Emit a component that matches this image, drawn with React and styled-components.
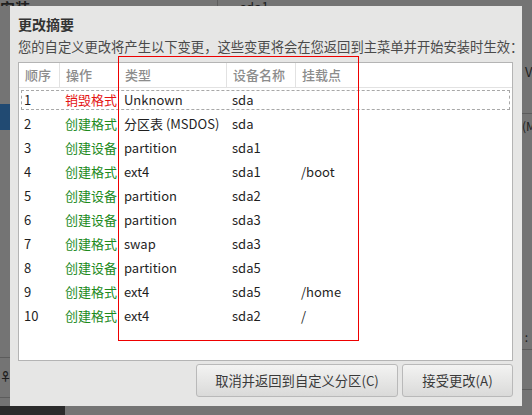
import React from "react";
import styled, { createGlobalStyle } from "styled-components";

const GlobalStyle = createGlobalStyle`
  html, body {
    margin: 0;
    padding: 0;
    background: #747474;
  }
  body {
    font-family: "Noto Sans CJK SC", "Noto Sans", sans-serif;
  }
`;

const Screen = styled.div`
  position: relative;
  width: 532px;
  height: 415px;
  overflow: hidden;
  background: #747474;
  display: grid;
  grid-template-columns: 10px 512px 10px;
  grid-template-rows: 6px 400px 9px;
`;

/* the dimmed installer window behind the dialog */
const TopBand = styled.div`
  grid-column: 1 / -1;
  display: grid;
  grid-template-columns: 217px 23px 1fr;
  overflow: hidden;
`;

const TopCell = styled.div`
  display: flex;
  align-items: flex-end;
  border-left: ${({ divided }) => (divided ? "1px solid #5e5e5e" : "none")};
`;

const DimText = styled.span`
  font-size: ${({ size }) => size || 13}px;
  font-weight: ${({ bold }) => (bold ? 700 : 400)};
  line-height: ${({ size }) => size || 13}px;
  color: #1e1e1e;
  white-space: nowrap;
  margin-bottom: ${({ drop }) => drop || 0}px;
`;

const SideStrip = styled.div`
  display: flex;
  flex-direction: column;
  overflow: hidden;
`;

const Gap = styled.div`
  flex: none;
  height: ${({ h }) => h}px;
`;

const Band = styled.div`
  flex: none;
  height: ${({ h }) => h || 1}px;
  background: ${({ color }) => color || "#5c5c5c"};
`;

const BottomBand = styled.div`
  grid-column: 1 / -1;
  display: flex;
`;

const Taskbar = styled.div`
  width: 65px;
  background: #2b2b2b;
`;

const Dialog = styled.div`
  position: relative;
  z-index: 1;
  background: #e6e6e5;
  padding: 8px 9px 9px 8px;
  display: flex;
  flex-direction: column;
`;

const Title = styled.div`
  font-size: 14px;
  font-weight: 700;
  line-height: 20px;
  color: #333;
`;

const Subtitle = styled.div`
  margin-top: 3px;
  font-size: 13.3px;
  line-height: 20px;
  color: #4a4a4a;
  white-space: nowrap;
`;

const Table = styled.div`
  margin-top: 5px;
  height: 299px;
  box-sizing: border-box;
  background: #fff;
  border: 1px solid #b4b4b4;
`;

const cols = "41px 59px 108px 69px 1fr";

const HeadRow = styled.div`
  display: grid;
  grid-template-columns: ${cols};
  height: 24px;
  border-bottom: 1px solid #e2e2e2;
`;

const HeadCell = styled.div`
  padding-left: 6px;
  font-size: 13px;
  line-height: 24px;
  color: #8c8c8c;
  font-weight: 500;
  border-right: ${({ last }) => (last ? "none" : "1px solid #e2e2e2")};
`;

const Row = styled.div`
  display: grid;
  grid-template-columns: ${cols};
  height: 24px;
  align-items: center;
  outline: ${({ focused }) => (focused ? "1px dashed #a8a8a8" : "none")};
  outline-offset: -3px;
`;

const Cell = styled.div`
  padding-left: 5px;
  font-size: 13px;
  line-height: 20px;
  color: ${({ tone }) =>
    tone === "destroy" ? "#e41414" : tone === "create" ? "#1d8a1d" : "#1f1f1f"};
  white-space: nowrap;
`;

const Footer = styled.div`
  margin-top: 3px;
  display: flex;
  justify-content: flex-end;
  gap: 4px;
`;

const Button = styled.button`
  width: ${({ w }) => w}px;
  height: 33px;
  box-sizing: border-box;
  border: 1px solid #b9b9b9;
  border-radius: 3px;
  background: linear-gradient(#f3f3f2, #dadad9);
  font-family: "Noto Sans CJK SC", "Noto Sans", sans-serif;
  font-size: 13.3px;
  color: #3a3a3a;
  padding: 0;
`;

// red annotation frame drawn over the screenshot
const Highlight = styled.div`
  position: absolute;
  z-index: 2;
  left: 118px;
  top: 56px;
  width: 241px;
  height: 285px;
  box-sizing: border-box;
  border: 1px solid #ee0000;
  pointer-events: none;
`;

const changes = [
  { action: "销毁格式", tone: "destroy", type: "Unknown", device: "sda", mount: "" },
  { action: "创建格式", tone: "create", type: "分区表 (MSDOS)", device: "sda", mount: "" },
  { action: "创建设备", tone: "create", type: "partition", device: "sda1", mount: "" },
  { action: "创建格式", tone: "create", type: "ext4", device: "sda1", mount: "/boot" },
  { action: "创建设备", tone: "create", type: "partition", device: "sda2", mount: "" },
  { action: "创建设备", tone: "create", type: "partition", device: "sda3", mount: "" },
  { action: "创建格式", tone: "create", type: "swap", device: "sda3", mount: "" },
  { action: "创建设备", tone: "create", type: "partition", device: "sda5", mount: "" },
  { action: "创建格式", tone: "create", type: "ext4", device: "sda5", mount: "/home" },
  { action: "创建格式", tone: "create", type: "ext4", device: "sda2", mount: "/" },
];

const headers = ["顺序", "操作", "类型", "设备名称", "挂载点"];

export default function App() {
  return (
    <Screen>
      <GlobalStyle />

      <TopBand>
        <TopCell>
          <DimText size={15} bold drop={-3}>
            安装
          </DimText>
        </TopCell>
        <TopCell divided />
        <TopCell>
          <DimText drop={-1}>sda1</DimText>
        </TopCell>
      </TopBand>

      <SideStrip>
        <Gap h={98} />
        <Band h={26} color="#214a72" />
        <Gap h={227} />
        <Band />
        <Gap h={13} />
        <DimText size={11} bold>
          ♀
        </DimText>
        <Gap h={15} />
        <Band />
      </SideStrip>

      <Dialog>
        <Title>更改摘要</Title>
        <Subtitle>
          您的自定义更改将产生以下变更，这些变更将会在您返回到主菜单并开始安装时生效：
        </Subtitle>
        <Table>
          <HeadRow>
            {headers.map((h, i) => (
              <HeadCell key={h} last={i === headers.length - 1}>
                {h}
              </HeadCell>
            ))}
          </HeadRow>
          {changes.map((c, i) => (
            <Row key={i} focused={i === 0}>
              <Cell>{i + 1}</Cell>
              <Cell tone={c.tone}>{c.action}</Cell>
              <Cell>{c.type}</Cell>
              <Cell>{c.device}</Cell>
              <Cell>{c.mount}</Cell>
            </Row>
          ))}
        </Table>
        <Footer>
          <Button w={202}>取消并返回到自定义分区(C)</Button>
          <Button w={111}>接受更改(A)</Button>
        </Footer>
      </Dialog>

      <SideStrip>
        <Gap h={59} />
        <DimText>&nbsp;V</DimText>
        <Gap h={35} />
        <Band />
        <Gap h={6} />
        <DimText size={12}>(M</DimText>
        <Gap h={199} />
        <DimText size={12}>&nbsp;:</DimText>
        <Gap h={6} />
        <Band />
        <Gap h={39} />
        <Band />
      </SideStrip>

      <BottomBand>
        <Taskbar />
      </BottomBand>

      <Highlight />
    </Screen>
  );
}
